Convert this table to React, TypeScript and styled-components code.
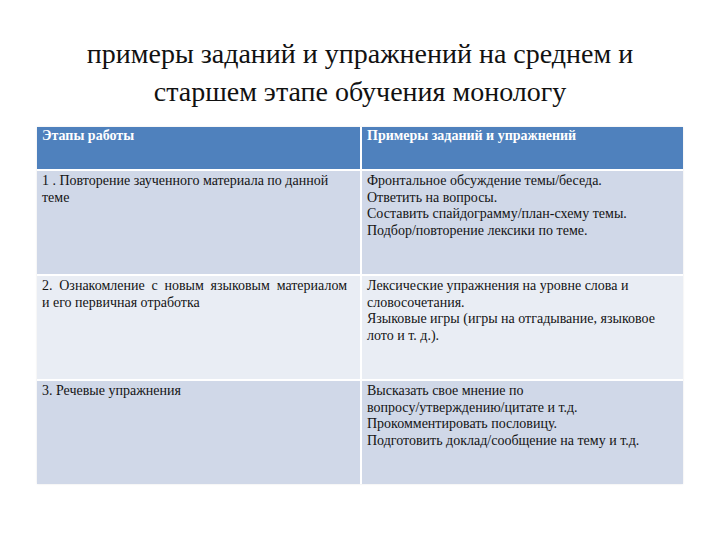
import React from "react";
import styled, { createGlobalStyle } from "styled-components";

const SERIF = `"Liberation Serif", "Times New Roman", serif`;

const Global = createGlobalStyle`
  html, body { margin: 0; padding: 0; background: #ffffff; }
  body { width: 720px; height: 540px; overflow: hidden; font-family: ${SERIF}; }
`;

const Page = styled.div`
  width: 720px;
  height: 540px;
  display: flex;
  flex-direction: column;
  align-items: center;
  padding-top: 35px;
  box-sizing: border-box;
`;

const Title = styled.h1`
  margin: 0;
  font-family: ${SERIF};
  font-weight: normal;
  font-size: 28px;
  line-height: 38px;
  color: #111;
  text-align: center;
  width: 620px;
`;

const Table = styled.div`
  margin-top: 16px;
  display: grid;
  grid-template-columns: 323px 321px;
  grid-template-rows: 42px 103px 103px 103px;
  gap: 2px;
  background: #ffffff;
  box-shadow: 0 0 2px rgba(0, 0, 0, 0.1);
`;

const Cell = styled.div<{ $tone: "head" | "dark" | "light" }>`
  background: ${(p) => (p.$tone === "head" ? "#4f81bd" : p.$tone === "dark" ? "#d0d8e8" : "#e9edf4")};
  color: ${(p) => (p.$tone === "head" ? "#ffffff" : "#141414")};
  font-weight: ${(p) => (p.$tone === "head" ? "bold" : "normal")};
  font-family: ${SERIF};
  font-size: 14px;
  line-height: ${(p) => (p.$tone === "head" ? "14px" : "16.6px")};
  padding: 2px 13px 0 5px;
  box-sizing: border-box;
  text-align: left;
`;

const Line = styled.div<{ $justify?: boolean }>`
  white-space: ${(p) => (p.$justify ? "normal" : "nowrap")};
  text-align: ${(p) => (p.$justify ? "justify" : "left")};
  text-align-last: ${(p) => (p.$justify ? "justify" : "auto")};
`;

type Row = { tone: "dark" | "light"; left: string[]; right: string[]; justifyFirst?: boolean };

const rows: Row[] = [
  {
    tone: "dark",
    left: ["1 . Повторение заученного материала по данной", "теме"],
    right: [
      "Фронтальное обсуждение темы/беседа.",
      "Ответить на вопросы.",
      "Составить спайдограмму/план-схему темы.",
      "Подбор/повторение лексики по теме.",
    ],
  },
  {
    tone: "light",
    left: ["2. Ознакомление с новым языковым материалом", "и его первичная отработка"],
    right: [
      "Лексические упражнения на уровне слова и",
      "словосочетания.",
      "Языковые игры (игры на отгадывание, языковое",
      "лото и т. д.).",
    ],
    justifyFirst: true,
  },
  {
    tone: "dark",
    left: ["3. Речевые упражнения"],
    right: [
      "Высказать свое мнение по",
      "вопросу/утверждению/цитате и т.д.",
      "Прокомментировать пословицу.",
      "Подготовить доклад/сообщение на тему и т.д.",
    ],
  },
];

export default function App() {
  return (
    <>
      <Global />
      <Page>
        <Title>
          примеры заданий и упражнений на среднем и старшем этапе обучения монологу
        </Title>
        <Table>
          <Cell $tone="head">Этапы работы</Cell>
          <Cell $tone="head">Примеры заданий и упражнений</Cell>
          {rows.map((r, i) => (
            <React.Fragment key={i}>
              <Cell $tone={r.tone}>
                {r.left.map((t, j) => (
                  <Line key={j} $justify={r.justifyFirst && j === 0}>
                    {t}
                  </Line>
                ))}
              </Cell>
              <Cell $tone={r.tone}>
                {r.right.map((t, j) => (
                  <Line key={j}>{t}</Line>
                ))}
              </Cell>
            </React.Fragment>
          ))}
        </Table>
      </Page>
    </>
  );
}
